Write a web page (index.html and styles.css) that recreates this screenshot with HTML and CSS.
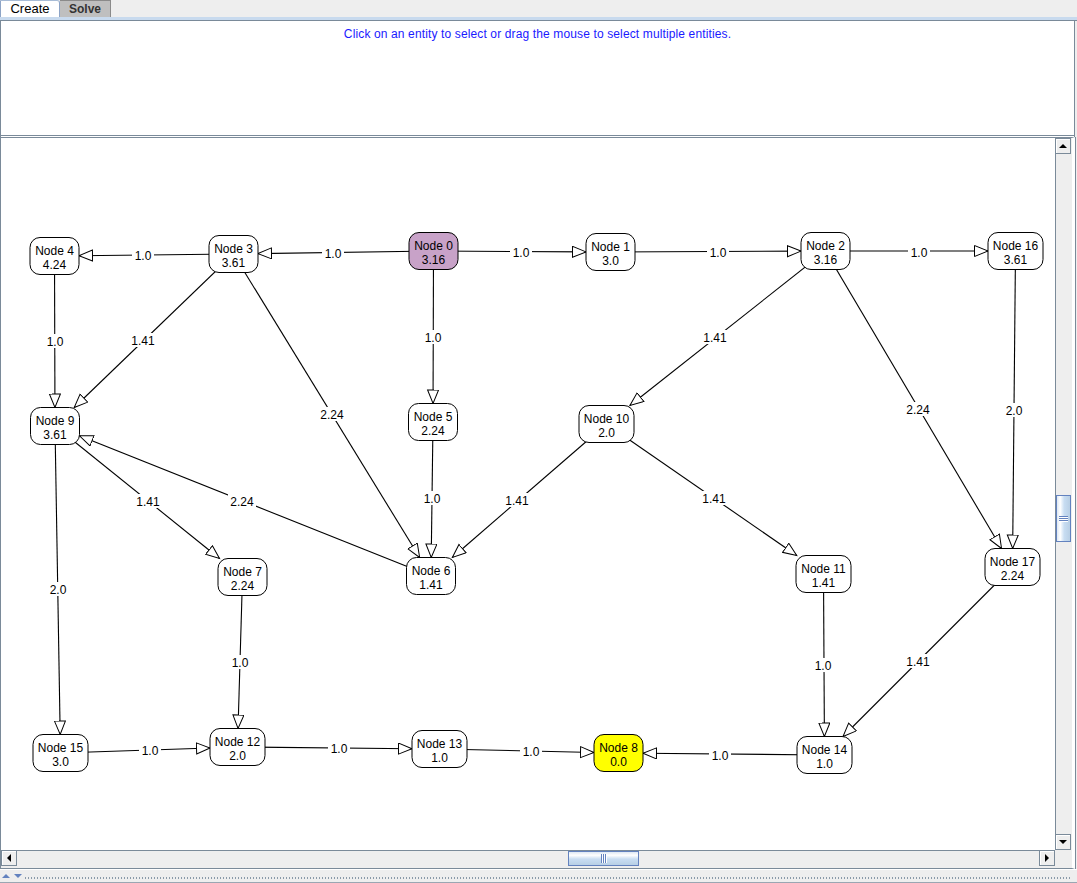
FILE: index.html
```html
<!DOCTYPE html>
<html>
<head>
<meta charset="utf-8">
<title>Graph</title>
<link rel="stylesheet" href="styles.css">
</head>
<body>
<div class="tabs">
  <div class="tab sel">Create</div>
  <div class="tab off">Solve</div>
</div>
<div class="band"></div>
<div class="msg">Click on an entity to select or drag the mouse to select multiple entities.</div>
<div class="gap"></div>
<div class="scroll">
  <div class="view">
    <svg class="graph" width="1054" height="712" viewBox="1 139 1054 712">
      <defs>
        <marker id="arr" markerWidth="16" markerHeight="14" refX="14" refY="6" orient="auto" markerUnits="userSpaceOnUse">
          <path d="M0.5,0.5 L14,6 L0.5,11.5 Z" class="head"/>
        </marker>
      </defs>
      <g class="edges">
        <line x1="433.5" y1="252" x2="258" y2="254.6"/>
        <line x1="233.5" y1="255" x2="79" y2="256.7"/>
        <line x1="433.5" y1="252" x2="586" y2="252.9"/>
        <line x1="610.5" y1="253" x2="801" y2="252.1"/>
        <line x1="825.5" y1="252" x2="988" y2="252"/>
        <line x1="433.5" y1="252" x2="433.05" y2="404.5"/>
        <line x1="54.5" y1="257" x2="54.95" y2="408.5"/>
        <line x1="233.5" y1="255" x2="74.2" y2="408.5"/>
        <line x1="233.5" y1="255" x2="419.65" y2="558.5"/>
        <line x1="825.5" y1="252" x2="629.9" y2="406.5"/>
        <line x1="825.5" y1="252" x2="1001.55" y2="549.5"/>
        <line x1="1015.5" y1="252" x2="1012.68" y2="549.5"/>
        <line x1="433" y1="423" x2="431.24" y2="558.5"/>
        <line x1="606.5" y1="425" x2="452.36" y2="558.5"/>
        <line x1="606.5" y1="425" x2="796.74" y2="556.5"/>
        <line x1="431" y1="577" x2="79.5" y2="436.8"/>
        <line x1="55" y1="427" x2="219.5" y2="559.5"/>
        <line x1="55" y1="427" x2="60.19" y2="735.5"/>
        <line x1="242.5" y1="578" x2="238.04" y2="729.5"/>
        <line x1="823.5" y1="575" x2="824.4" y2="737.5"/>
        <line x1="1012.5" y1="568" x2="843" y2="737.5"/>
        <line x1="60.5" y1="754" x2="210" y2="748.93"/>
        <line x1="237.5" y1="748" x2="412" y2="749.73"/>
        <line x1="439.5" y1="750" x2="594" y2="753.45"/>
        <line x1="824.5" y1="756" x2="643" y2="754.24"/>
      </g>
      <g class="labels">
        <g transform="translate(333,254)"><rect x="-11" y="-7" width="22" height="14"/><text y="5">1.0</text></g>
        <g transform="translate(143,256)"><rect x="-11" y="-7" width="22" height="14"/><text y="5">1.0</text></g>
        <g transform="translate(521,253)"><rect x="-11" y="-7" width="22" height="14"/><text y="5">1.0</text></g>
        <g transform="translate(718,253)"><rect x="-11" y="-7" width="22" height="14"/><text y="5">1.0</text></g>
        <g transform="translate(919,253)"><rect x="-11" y="-7" width="22" height="14"/><text y="5">1.0</text></g>
        <g transform="translate(433,338)"><rect x="-11" y="-7" width="22" height="14"/><text y="5">1.0</text></g>
        <g transform="translate(55,342)"><rect x="-11" y="-7" width="22" height="14"/><text y="5">1.0</text></g>
        <g transform="translate(143,341)"><rect x="-14" y="-7" width="28" height="14"/><text y="5">1.41</text></g>
        <g transform="translate(332,415)"><rect x="-14" y="-7" width="28" height="14"/><text y="5">2.24</text></g>
        <g transform="translate(715,338)"><rect x="-14" y="-7" width="28" height="14"/><text y="5">1.41</text></g>
        <g transform="translate(918,410)"><rect x="-14" y="-7" width="28" height="14"/><text y="5">2.24</text></g>
        <g transform="translate(1014,411)"><rect x="-11" y="-7" width="22" height="14"/><text y="5">2.0</text></g>
        <g transform="translate(432,499)"><rect x="-11" y="-7" width="22" height="14"/><text y="5">1.0</text></g>
        <g transform="translate(517,501)"><rect x="-14" y="-7" width="28" height="14"/><text y="5">1.41</text></g>
        <g transform="translate(714,499)"><rect x="-14" y="-7" width="28" height="14"/><text y="5">1.41</text></g>
        <g transform="translate(242,502)"><rect x="-14" y="-7" width="28" height="14"/><text y="5">2.24</text></g>
        <g transform="translate(148,502)"><rect x="-14" y="-7" width="28" height="14"/><text y="5">1.41</text></g>
        <g transform="translate(58,590)"><rect x="-11" y="-7" width="22" height="14"/><text y="5">2.0</text></g>
        <g transform="translate(240,663)"><rect x="-11" y="-7" width="22" height="14"/><text y="5">1.0</text></g>
        <g transform="translate(823,666)"><rect x="-11" y="-7" width="22" height="14"/><text y="5">1.0</text></g>
        <g transform="translate(918,662)"><rect x="-14" y="-7" width="28" height="14"/><text y="5">1.41</text></g>
        <g transform="translate(150,751)"><rect x="-11" y="-7" width="22" height="14"/><text y="5">1.0</text></g>
        <g transform="translate(339,749)"><rect x="-11" y="-7" width="22" height="14"/><text y="5">1.0</text></g>
        <g transform="translate(531,752)"><rect x="-11" y="-7" width="22" height="14"/><text y="5">1.0</text></g>
        <g transform="translate(720,756)"><rect x="-11" y="-7" width="22" height="14"/><text y="5">1.0</text></g>
      </g>
      <g class="nodes">
        <g class="node start" transform="translate(433.5,252)"><rect x="-24.5" y="-18.5" width="49" height="37" rx="10"/><text y="-1">Node 0</text><text y="13">3.16</text></g>
        <g class="node" transform="translate(610.5,253)"><rect x="-24.5" y="-18.5" width="49" height="37" rx="10"/><text y="-1">Node 1</text><text y="13">3.0</text></g>
        <g class="node" transform="translate(825.5,252)"><rect x="-24.5" y="-18.5" width="49" height="37" rx="10"/><text y="-1">Node 2</text><text y="13">3.16</text></g>
        <g class="node" transform="translate(1015.5,252)"><rect x="-27.5" y="-18.5" width="55" height="37" rx="10"/><text y="-1">Node 16</text><text y="13">3.61</text></g>
        <g class="node" transform="translate(233.5,255)"><rect x="-24.5" y="-18.5" width="49" height="37" rx="10"/><text y="-1">Node 3</text><text y="13">3.61</text></g>
        <g class="node" transform="translate(54.5,257)"><rect x="-24.5" y="-18.5" width="49" height="37" rx="10"/><text y="-1">Node 4</text><text y="13">4.24</text></g>
        <g class="node" transform="translate(55,427)"><rect x="-24.5" y="-18.5" width="49" height="37" rx="10"/><text y="-1">Node 9</text><text y="13">3.61</text></g>
        <g class="node" transform="translate(433,423)"><rect x="-24.5" y="-18.5" width="49" height="37" rx="10"/><text y="-1">Node 5</text><text y="13">2.24</text></g>
        <g class="node" transform="translate(606.5,425)"><rect x="-27.5" y="-18.5" width="55" height="37" rx="10"/><text y="-1">Node 10</text><text y="13">2.0</text></g>
        <g class="node" transform="translate(1012.5,568)"><rect x="-27.5" y="-18.5" width="55" height="37" rx="10"/><text y="-1">Node 17</text><text y="13">2.24</text></g>
        <g class="node" transform="translate(242.5,578)"><rect x="-24.5" y="-18.5" width="49" height="37" rx="10"/><text y="-1">Node 7</text><text y="13">2.24</text></g>
        <g class="node" transform="translate(431,577)"><rect x="-24.5" y="-18.5" width="49" height="37" rx="10"/><text y="-1">Node 6</text><text y="13">1.41</text></g>
        <g class="node" transform="translate(823.5,575)"><rect x="-27.5" y="-18.5" width="55" height="37" rx="10"/><text y="-1">Node 11</text><text y="13">1.41</text></g>
        <g class="node" transform="translate(60.5,754)"><rect x="-27.5" y="-18.5" width="55" height="37" rx="10"/><text y="-1">Node 15</text><text y="13">3.0</text></g>
        <g class="node" transform="translate(237.5,748)"><rect x="-27.5" y="-18.5" width="55" height="37" rx="10"/><text y="-1">Node 12</text><text y="13">2.0</text></g>
        <g class="node" transform="translate(439.5,750)"><rect x="-27.5" y="-18.5" width="55" height="37" rx="10"/><text y="-1">Node 13</text><text y="13">1.0</text></g>
        <g class="node goal" transform="translate(618.5,754)"><rect x="-24.5" y="-18.5" width="49" height="37" rx="10"/><text y="-1">Node 8</text><text y="13">0.0</text></g>
        <g class="node" transform="translate(824.5,756)"><rect x="-27.5" y="-18.5" width="55" height="37" rx="10"/><text y="-1">Node 14</text><text y="13">1.0</text></g>
      </g>
    </svg>
  </div>
  <div class="vbar">
    <div class="btn"><span class="tri up"></span></div>
    <div class="vtrack"><div class="vthumb"><span class="grip"></span><span class="grip"></span><span class="grip"></span></div></div>
    <div class="btn"><span class="tri down"></span></div>
  </div>
  <div class="hbar">
    <div class="btn"><span class="tri left"></span></div>
    <div class="htrack"><div class="hthumb"><span class="grip"></span><span class="grip"></span><span class="grip"></span></div></div>
    <div class="btn"><span class="tri right"></span></div>
  </div>
  <div class="corner"></div>
</div>
<div class="divider">
  <span class="exp up"></span><span class="exp down"></span>
  <span class="dots"></span>
</div>
</body>
</html>
```

FILE: styles.css
```css
* { box-sizing: border-box; }
html, body { margin: 0; padding: 0; }
body {
  width: 1077px;
  height: 883px;
  overflow: hidden;
  background: #eeeeee;
  font-family: "Liberation Sans", Arial, sans-serif;
  font-size: 12px;
}

/* tabs */
.tabs { display: flex; height: 17px; }
.tab {
  height: 17px;
  line-height: 16px;
  text-align: center;
  font-size: 12px;
}
.tab.sel {
  width: 60px;
  background: #ffffff;
  color: #000;
  font-size: 13px;
  border-left: 1px solid #8da4c6;
  border-top: 1px solid #a8bcd6;
  border-right: 1px solid #8da4c6;
  border-top-right-radius: 3px;
}
.tab.off {
  width: 51px;
  background: #bfbfbf;
  color: #333;
  font-weight: bold;
  border-top: 1px solid #8a8a8a;
  border-right: 1px solid #8a8a8a;
}
.band {
  height: 4px;
  background: #c8daee;
  border-bottom: 1px solid #7a8a99;
}

/* message panel */
.msg {
  width: 1075px;
  height: 115px;
  background: #ffffff;
  border-left: 1px solid #7a8a99;
  border-right: 1px solid #7a8a99;
  border-bottom: 1px solid #7a8a99;
  color: #1a1aff;
  text-align: center;
  padding-top: 6px;
  letter-spacing: 0.13px;
  line-height: 14px;
}
.gap {
  width: 1075px;
  height: 1px;
  background: #ffffff;
  border-left: 1px solid #7a8a99;
  border-right: 1px solid #7a8a99;
}

/* scroll pane */
.scroll {
  width: 1075px;
  height: 732px;
  border: 1px solid #7a8a99;
  border-right: 3px solid #ffffff;
  box-shadow: 1px 0 0 #7a8a99;
  display: grid;
  grid-template-columns: 1054px 16px;
  grid-template-rows: 712px 16px;
  background: #eeeeee;
}
.view { background: #ffffff; overflow: hidden; }
.graph { display: block; }
.edges line { stroke: #000; stroke-width: 1.1; marker-end: url(#arr); }
.head { fill: #ffffff; stroke: #000; stroke-width: 1; }
.labels rect { fill: #ffffff; }
.graph text {
  font-family: "Liberation Sans", Arial, sans-serif;
  font-size: 12px;
  text-anchor: middle;
  fill: #000;
}
.node rect { fill: #ffffff; stroke: #000; stroke-width: 1; }
.node.start rect { fill: #c8a2c8; }
.node.goal rect { fill: #ffff00; }

/* scrollbars */
.vbar {
  display: flex;
  flex-direction: column;
  background: #eeeeee;
  border-left: 1px solid #7a8a99;
}
.hbar {
  display: flex;
  background: #eeeeee;
  border-top: 1px solid #7a8a99;
}
.btn {
  width: 15px;
  height: 16px;
  flex: none;
  background: #eeeeee;
  border: 1px solid #7a8a99;
  box-shadow: inset 1px 1px 0 #ffffff;
  display: flex;
  align-items: center;
  justify-content: center;
}
.vbar .btn { width: 15px; height: 16px; border-left: none; }
.hbar .btn { width: 16px; height: 15px; border-top: none; }
.vtrack { flex: 1; background: #eeeeee; }
.htrack { flex: 1; background: #eeeeee; }
.vthumb {
  margin-top: 341px;
  height: 47px;
  width: 15px;
  border: 1px solid #6382bf;
  background: linear-gradient(to right, #dde8f3 0%, #ffffff 25%, #c8ddf2 55%, #b8cfe5 100%);
  display: flex;
  flex-direction: column;
  align-items: center;
  justify-content: center;
  gap: 1px;
}
.vthumb .grip { width: 9px; height: 1px; background: #6382bf; box-shadow: 0 1px 0 #ffffff; }
.hthumb {
  margin-left: 551px;
  width: 71px;
  height: 15px;
  border: 1px solid #6382bf;
  background: linear-gradient(to bottom, #dde8f3 0%, #ffffff 25%, #c8ddf2 55%, #b8cfe5 100%);
  display: flex;
  align-items: center;
  justify-content: center;
  gap: 1px;
}
.hthumb .grip { width: 1px; height: 9px; background: #6382bf; box-shadow: 1px 0 0 #ffffff; }
.corner { background: #eeeeee; }

.tri { width: 0; height: 0; display: block; }
.tri.up { border-left: 4px solid transparent; border-right: 4px solid transparent; border-bottom: 4px solid #000; }
.tri.down { border-left: 4px solid transparent; border-right: 4px solid transparent; border-top: 4px solid #000; }
.tri.left { border-top: 4px solid transparent; border-bottom: 4px solid transparent; border-right: 4px solid #000; }
.tri.right { border-top: 4px solid transparent; border-bottom: 4px solid transparent; border-left: 4px solid #000; }

/* bottom split divider */
.divider {
  height: 14px;
  display: flex;
  align-items: center;
  padding-left: 2px;
  gap: 3px;
  border-top: 1px solid #ffffff;
  border-bottom: 1px solid #9aa6b2;
}
.exp { width: 0; height: 0; display: block; }
.exp.up { border-left: 4px solid transparent; border-right: 4px solid transparent; border-bottom: 4px solid #6382bf; }
.exp.down { border-left: 4px solid transparent; border-right: 4px solid transparent; border-top: 4px solid #6382bf; margin-left: 1px; }
.dots {
  flex: 1;
  height: 2px;
  margin-right: 6px;
  margin-top: 3px;
  background-image: repeating-linear-gradient(to right, #8a9aa9 0, #8a9aa9 1px, transparent 1px, transparent 3px);
}
```
